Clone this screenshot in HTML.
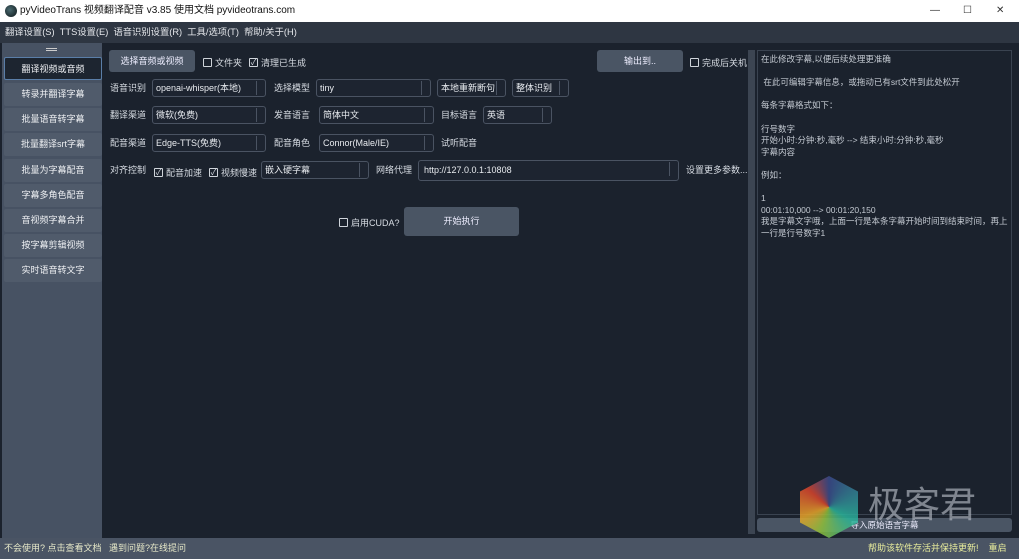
<!DOCTYPE html>
<html><head><meta charset="utf-8"><style>
*{box-sizing:border-box;margin:0;padding:0}
body{width:1019px;height:559px;overflow:hidden;background:#1b222d;font-family:"Liberation Sans","Noto Sans CJK SC",sans-serif;font-size:9px;color:#d8dde4;position:relative}
.a{position:absolute}
.title{left:0;top:0;width:1019px;height:22px;background:#fff;color:#111;font-size:10px;line-height:22px;padding-left:20px}
.menu{left:0;top:22px;width:1019px;height:21px;background:#2e3642;line-height:21px;padding-left:5px;color:#e6e8ec;font-size:9.3px}
.side{left:2px;top:43px;width:100px;height:495px;background:#475263}
.sb{position:absolute;left:2px;width:98px;height:23px;background:#505b6b;text-align:center;line-height:23px;color:#eef0f3;border-radius:2px}
.sb.sel{background:#1d2530;border:1px solid #5a7ea8}
.btn{position:absolute;background:#4a5564;border-radius:3px;text-align:center;color:#eef;}
.cb{position:absolute;display:flex;align-items:center;gap:3px}
.cb i{display:inline-block;width:9px;height:9px;border:1px solid #cfd4da;border-radius:1px;font-style:normal;font-size:8px;line-height:7px;text-align:center}
.lbl{position:absolute;line-height:16px}
.sel2{position:absolute;height:18px;border:1px solid #4a5362;border-radius:3px;background:#1d2430;line-height:16px;padding-left:3px;color:#e8ebef}
.sel2:after{content:"";position:absolute;right:0;top:1px;width:8px;height:14px;border-left:1px solid #4a5362}
.status{left:0;top:538px;width:1019px;height:21px;background:#4a5464;line-height:21px}
</style></head><body>
<div class="a title"><span style="position:absolute;left:5px;top:5px;width:12px;height:12px;border-radius:50%;background:radial-gradient(circle at 40% 40%,#4a6a70,#0c1416)"></span>pyVideoTrans 视频翻译配音 v3.85 使用文档 pyvideotrans.com
<span style="position:absolute;left:930px;top:0;color:#333">—</span><span style="position:absolute;left:963px;top:0;color:#333">☐</span><span style="position:absolute;left:996px;top:0;color:#333">✕</span></div>
<div class="a menu">翻译设置(S)&nbsp; TTS设置(E)&nbsp; 语音识别设置(R)&nbsp; 工具/选项(T)&nbsp; 帮助/关于(H)</div>
<div class="a side">
<div style="position:absolute;left:44px;top:5px;width:11px;height:3px;border-top:1px solid #ccc;border-bottom:1px solid #ccc"></div>
<div class="sb sel" style="top:14px">翻译视频或音频</div>
<div class="sb" style="top:40px">转录并翻译字幕</div>
<div class="sb" style="top:65px">批量语音转字幕</div>
<div class="sb" style="top:90px">批量翻译srt字幕</div>
<div class="sb" style="top:116px">批量为字幕配音</div>
<div class="sb" style="top:141px">字幕多角色配音</div>
<div class="sb" style="top:166px">音视频字幕合并</div>
<div class="sb" style="top:191px">按字幕剪辑视频</div>
<div class="sb" style="top:216px">实时语音转文字</div>
</div>
<div class="btn" style="left:109px;top:50px;width:86px;height:22px;line-height:22px">选择音频或视频</div>
<div class="cb" style="left:203px;top:56px"><i></i>文件夹</div>
<div class="cb" style="left:249px;top:56px"><i>✓</i>清理已生成</div>
<div class="btn" style="left:597px;top:50px;width:86px;height:22px;line-height:22px">输出到..</div>
<div class="cb" style="left:690px;top:56px"><i></i>完成后关机</div>

<div class="lbl" style="left:110px;top:80px">语音识别</div>
<div class="sel2" style="left:152px;top:79px;width:114px">openai-whisper(本地)</div>
<div class="lbl" style="left:274px;top:80px">选择模型</div>
<div class="sel2" style="left:316px;top:79px;width:115px">tiny</div>
<div class="sel2" style="left:437px;top:79px;width:69px">本地重新断句</div>
<div class="sel2" style="left:512px;top:79px;width:57px">整体识别</div>

<div class="lbl" style="left:110px;top:107px">翻译渠道</div>
<div class="sel2" style="left:152px;top:106px;width:114px">微软(免费)</div>
<div class="lbl" style="left:274px;top:107px">发音语言</div>
<div class="sel2" style="left:319px;top:106px;width:115px">简体中文</div>
<div class="lbl" style="left:441px;top:107px">目标语言</div>
<div class="sel2" style="left:483px;top:106px;width:69px">英语</div>

<div class="lbl" style="left:110px;top:135px">配音渠道</div>
<div class="sel2" style="left:152px;top:134px;width:114px">Edge-TTS(免费)</div>
<div class="lbl" style="left:274px;top:135px">配音角色</div>
<div class="sel2" style="left:319px;top:134px;width:115px">Connor(Male/IE)</div>
<div class="lbl" style="left:441px;top:135px">试听配音</div>

<div class="lbl" style="left:110px;top:162px">对齐控制</div>
<div class="cb" style="left:154px;top:166px"><i>✓</i>配音加速</div>
<div class="cb" style="left:209px;top:166px"><i>✓</i>视频慢速</div>
<div class="sel2" style="left:261px;top:161px;width:108px">嵌入硬字幕</div>
<div class="lbl" style="left:376px;top:162px">网络代理</div>
<div class="sel2" style="left:418px;top:160px;width:261px;height:21px;line-height:19px;padding-left:5px">http://127.0.0.1:10808</div>
<div class="lbl" style="left:686px;top:162px">设置更多参数...</div>

<div class="cb" style="left:339px;top:216px"><i></i>启用CUDA?</div>
<div class="btn" style="left:404px;top:207px;width:115px;height:29px;line-height:29px">开始执行</div>

<div class="a" style="left:748px;top:50px;width:7px;height:484px;background:#3c4552"></div>
<div class="a" style="left:757px;top:50px;width:255px;height:465px;border:1px solid #3a4350;background:#1b222d;padding:3px;line-height:11.6px;font-size:8.5px;color:#c4cad2;white-space:pre">在此修改字幕,以便后续处理更准确

 在此可编辑字幕信息，或拖动已有srt文件到此处松开

每条字幕格式如下：

行号数字
开始小时:分钟:秒,毫秒 --> 结束小时:分钟:秒,毫秒
字幕内容

例如：

1
00:01:10,000 --> 00:01:20,150
我是字幕文字哦，上面一行是本条字幕开始时间到结束时间，再上
一行是行号数字1</div>
<div class="btn" style="left:757px;top:518px;width:255px;height:14px;line-height:14px;font-size:8.5px">导入原始语言字幕</div>
<div class="a" style="left:800px;top:476px;width:58px;height:62px;opacity:.85;clip-path:polygon(50% 0,100% 25%,100% 75%,50% 100%,0 75%,0 25%);background:conic-gradient(from 0deg,#3a4a8a,#2ab39a 120deg,#8fbf3a 200deg,#e8a42a 250deg,#d9442c 310deg,#3a4a8a)"></div>
<div class="a" style="left:868px;top:476px;font-size:36px;color:rgba(170,175,185,.7)">极客君</div>
<div class="a status"><span style="position:absolute;left:4px;color:#e6e8c8">不会使用? 点击查看文档&nbsp;&nbsp; 遇到问题?在线提问</span><span style="position:absolute;left:868px;color:#e8ec9c">帮助该软件存活并保持更新!&nbsp;&nbsp;&nbsp; 重启</span></div>
</body></html>
